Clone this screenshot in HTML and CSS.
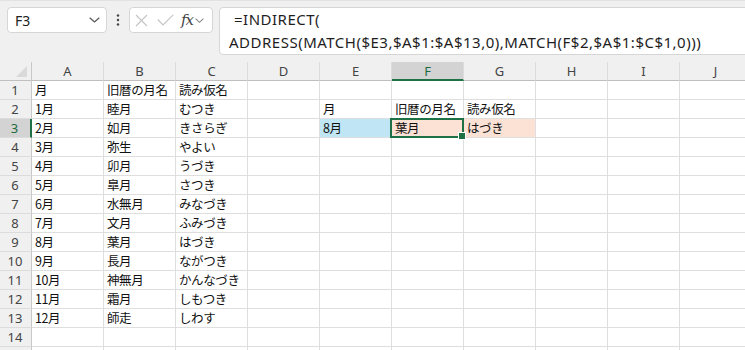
FILE: index.html
```html
<!DOCTYPE html>
<html lang="ja">
<head>
    <meta charset="UTF-8">
    <title>INDIRECT ADDRESS MATCH</title>
    <link rel="stylesheet" href="styles.css">
</head>
<body>
    <div class="topbar">
        <div class="namebox">
            <span class="name">F3</span>
            <svg class="chev" width="11" height="6" viewBox="0 0 11 6"><polyline points="0.7,0.7 5.5,5 10.3,0.7" fill="none" stroke="#5a5a5a" stroke-width="1.3"/></svg>
        </div>
        <div class="grip">
            <svg width="4" height="12" viewBox="0 0 4 12"><circle cx="2" cy="1.5" r="1.2" fill="#444"/><circle cx="2" cy="6" r="1.2" fill="#444"/><circle cx="2" cy="10.5" r="1.2" fill="#444"/></svg>
        </div>
        <div class="fxbox">
            <svg width="13" height="13" viewBox="0 0 13 13"><path d="M1 1 L12 12 M12 1 L1 12" stroke="#c4c4c4" stroke-width="1.1" fill="none"/></svg>
            <svg width="17" height="12" viewBox="0 0 17 12"><polyline points="0.8,5.5 6,11 16.2,0.8" stroke="#c4c4c4" stroke-width="1.1" fill="none"/></svg>
            <span class="fx">fx</span>
            <svg width="9" height="5" viewBox="0 0 9 5"><polyline points="0.6,0.6 4.5,4.3 8.4,0.6" fill="none" stroke="#8a8a8a" stroke-width="1.1"/></svg>
        </div>
        <div class="formula">
            <div class="f-line first">=INDIRECT(</div>
            <div class="f-line">ADDRESS(MATCH($E3,$A$1:$A$13,0),MATCH(F$2,$A$1:$C$1,0)))</div>
        </div>
    </div>

    <div class="sheet">
        <div class="corner"><svg width="11" height="11" viewBox="0 0 11 11"><polygon points="11,0 11,11 0,11" fill="#d9d9d9"/></svg></div>
        <div class="colhead">A</div>
        <div class="colhead">B</div>
        <div class="colhead">C</div>
        <div class="colhead">D</div>
        <div class="colhead">E</div>
        <div class="colhead active">F</div>
        <div class="colhead">G</div>
        <div class="colhead">H</div>
        <div class="colhead">I</div>
        <div class="colhead">J</div>

        <div class="rowhead">1</div>
        <div class="cell">月</div><div class="cell">旧暦の月名</div><div class="cell">読み仮名</div>
        <div class="cell"></div><div class="cell"></div><div class="cell"></div><div class="cell"></div><div class="cell"></div><div class="cell"></div><div class="cell"></div>

        <div class="rowhead">2</div>
        <div class="cell">1月</div><div class="cell">睦月</div><div class="cell">むつき</div>
        <div class="cell"></div><div class="cell">月</div><div class="cell">旧暦の月名</div><div class="cell">読み仮名</div><div class="cell"></div><div class="cell"></div><div class="cell"></div>

        <div class="rowhead active">3</div>
        <div class="cell">2月</div><div class="cell">如月</div><div class="cell">きさらぎ</div>
        <div class="cell"></div><div class="cell fill-blue">8月</div><div class="cell fill-peach selected">葉月</div><div class="cell fill-peach">はづき</div><div class="cell"></div><div class="cell"></div><div class="cell"></div>

        <div class="rowhead">4</div>
        <div class="cell">3月</div><div class="cell">弥生</div><div class="cell">やよい</div>
        <div class="cell"></div><div class="cell"></div><div class="cell"></div><div class="cell"></div><div class="cell"></div><div class="cell"></div><div class="cell"></div>

        <div class="rowhead">5</div>
        <div class="cell">4月</div><div class="cell">卯月</div><div class="cell">うづき</div>
        <div class="cell"></div><div class="cell"></div><div class="cell"></div><div class="cell"></div><div class="cell"></div><div class="cell"></div><div class="cell"></div>

        <div class="rowhead">6</div>
        <div class="cell">5月</div><div class="cell">皐月</div><div class="cell">さつき</div>
        <div class="cell"></div><div class="cell"></div><div class="cell"></div><div class="cell"></div><div class="cell"></div><div class="cell"></div><div class="cell"></div>

        <div class="rowhead">7</div>
        <div class="cell">6月</div><div class="cell">水無月</div><div class="cell">みなづき</div>
        <div class="cell"></div><div class="cell"></div><div class="cell"></div><div class="cell"></div><div class="cell"></div><div class="cell"></div><div class="cell"></div>

        <div class="rowhead">8</div>
        <div class="cell">7月</div><div class="cell">文月</div><div class="cell">ふみづき</div>
        <div class="cell"></div><div class="cell"></div><div class="cell"></div><div class="cell"></div><div class="cell"></div><div class="cell"></div><div class="cell"></div>

        <div class="rowhead">9</div>
        <div class="cell">8月</div><div class="cell">葉月</div><div class="cell">はづき</div>
        <div class="cell"></div><div class="cell"></div><div class="cell"></div><div class="cell"></div><div class="cell"></div><div class="cell"></div><div class="cell"></div>

        <div class="rowhead">10</div>
        <div class="cell">9月</div><div class="cell">長月</div><div class="cell">ながつき</div>
        <div class="cell"></div><div class="cell"></div><div class="cell"></div><div class="cell"></div><div class="cell"></div><div class="cell"></div><div class="cell"></div>

        <div class="rowhead">11</div>
        <div class="cell">10月</div><div class="cell">神無月</div><div class="cell">かんなづき</div>
        <div class="cell"></div><div class="cell"></div><div class="cell"></div><div class="cell"></div><div class="cell"></div><div class="cell"></div><div class="cell"></div>

        <div class="rowhead">12</div>
        <div class="cell">11月</div><div class="cell">霜月</div><div class="cell">しもつき</div>
        <div class="cell"></div><div class="cell"></div><div class="cell"></div><div class="cell"></div><div class="cell"></div><div class="cell"></div><div class="cell"></div>

        <div class="rowhead">13</div>
        <div class="cell">12月</div><div class="cell">師走</div><div class="cell">しわす</div>
        <div class="cell"></div><div class="cell"></div><div class="cell"></div><div class="cell"></div><div class="cell"></div><div class="cell"></div><div class="cell"></div>

        <div class="rowhead">14</div>
        <div class="cell"></div><div class="cell"></div><div class="cell"></div>
        <div class="cell"></div><div class="cell"></div><div class="cell"></div><div class="cell"></div><div class="cell"></div><div class="cell"></div><div class="cell"></div>

        <div class="rowhead"></div>
        <div class="cell"></div><div class="cell"></div><div class="cell"></div>
        <div class="cell"></div><div class="cell"></div><div class="cell"></div><div class="cell"></div><div class="cell"></div><div class="cell"></div><div class="cell"></div>
    </div>
</body>
</html>
```

FILE: styles.css
```css
* {
    margin: 0;
    padding: 0;
    box-sizing: border-box;
}

body {
    width: 745px;
    height: 350px;
    overflow: hidden;
    background: #ffffff;
    font-family: "Noto Sans", "Noto Sans CJK JP", sans-serif;
    color: #222222;
}

/* formula bar */
.topbar {
    height: 62px;
    background: #f0f0f0;
    border-top: 1px solid #e2e2e2;
    display: flex;
    align-items: flex-start;
    padding: 6px 0 0 7px;
    overflow: hidden;
}

.namebox {
    width: 100px;
    height: 26px;
    flex-shrink: 0;
    background: #ffffff;
    border: 1px solid #d6d6d6;
    border-radius: 4px;
    display: flex;
    align-items: center;
    justify-content: space-between;
    padding: 0 6px 0 7px;
}

.name {
    font-size: 14px;
    color: #222222;
}

.grip {
    width: 22px;
    height: 26px;
    flex-shrink: 0;
    display: flex;
    align-items: center;
    justify-content: center;
}

.fxbox {
    width: 84px;
    height: 26px;
    flex-shrink: 0;
    background: #ffffff;
    border: 1px solid #d6d6d6;
    border-radius: 4px;
    display: flex;
    align-items: center;
    gap: 9px;
    padding-left: 5px;
}

.fx {
    font-family: "DejaVu Serif", "Liberation Serif", serif;
    font-style: italic;
    font-size: 15px;
    color: #444444;
    letter-spacing: -1px;
    margin-left: -2px;
    margin-right: -7px;
}

.formula {
    flex: 1;
    min-width: 560px;
    height: 48px;
    margin-left: 6px;
    background: #ffffff;
    border: 1px solid #d6d6d6;
    border-radius: 4px;
    padding: 0 0 0 9px;
    font-size: 15px;
    line-height: 23px;
    letter-spacing: 0.5px;
    color: #1e1e1e;
    white-space: nowrap;
}

.f-line.first {
    padding-left: 5px;
}

/* grid */
.sheet {
    display: grid;
    grid-template-columns: 32px repeat(10, 72px);
    grid-auto-rows: 19px;
    width: 752px;
}

.corner,
.colhead,
.rowhead {
    background: #f0f0f0;
    font-size: 13px;
    color: #444444;
    display: flex;
    align-items: center;
    justify-content: center;
}

.corner {
    border-right: 1px solid #c8c8c8;
    border-bottom: 1px solid #c0c0c0;
    align-items: flex-end;
    justify-content: flex-end;
    padding: 0 4px 3px 0;
}

.colhead {
    border-bottom: 1px solid #c0c0c0;
    border-right: 1px solid #dcdcdc;
}

.colhead.active {
    background: #d3d3d3;
    color: #1d6b40;
    border-bottom: 2px solid #1e7145;
    padding-top: 1px;
}

.rowhead {
    border-right: 1px solid #c8c8c8;
    border-bottom: 1px solid #dcdcdc;
    padding-right: 1px;
}

.rowhead.active {
    background: #d3d3d3;
    color: #1d6b40;
    border-right: 2px solid #1e7145;
}

.cell {
    border-right: 1px solid #dedede;
    border-bottom: 1px solid #dedede;
    font-family: "Noto Sans CJK JP", sans-serif;
    font-size: 12.5px;
    letter-spacing: -0.4px;
    color: #111111;
    line-height: 18px;
    padding-left: 3px;
    white-space: nowrap;
    overflow: visible;
}

.fill-blue {
    background: #c0e6f5;
}

.fill-peach {
    background: #fbe2d5;
}

.selected {
    position: relative;
}

.selected::after {
    content: "";
    position: absolute;
    left: -2px;
    top: -1px;
    right: -1px;
    bottom: -1px;
    border: 2px solid #1e7145;
}

.selected::before {
    content: "";
    position: absolute;
    right: -3px;
    bottom: -3px;
    width: 6px;
    height: 6px;
    background: #1e7145;
    border: 1px solid #ffffff;
    z-index: 1;
}
```
